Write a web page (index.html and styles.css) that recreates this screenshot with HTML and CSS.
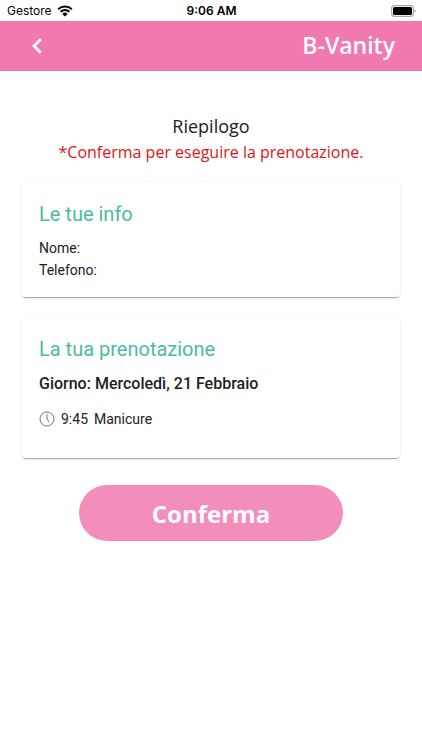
FILE: index.html
```html
<!DOCTYPE html>
<html lang="it">
<head>
<meta charset="utf-8">
<meta name="viewport" content="width=device-width, initial-scale=1">
<title>B-Vanity</title>
<link rel="stylesheet" href="styles.css">
</head>
<body>
<div class="status">
  <div class="carrier">
    <span>Gestore</span>
    <svg class="wifi" viewBox="0 0 16 12" aria-hidden="true">
      <path d="M1.2 4.3A9.8 9.8 0 0 1 14.8 4.3M3.6 6.7A6.3 6.3 0 0 1 12.4 6.7" fill="none" stroke="#000" stroke-width="2"/>
      <path d="M8 11.6 5.3 8.9A3.8 3.8 0 0 1 10.7 8.9Z"/>
    </svg>
  </div>
  <span class="time">9:06 AM</span>
  <svg class="battery" viewBox="0 0 25 12" aria-hidden="true">
    <rect x=".6" y=".6" width="21.8" height="10.8" rx="3" fill="#fff" stroke="#a6a6a6" stroke-width="1.1"/>
    <rect x="2" y="2" width="19" height="8" rx="1.6"/>
    <path d="M23.6 4.2a2 2 0 0 1 0 3.6z" fill="#999"/>
  </svg>
</div>
<header class="bar">
  <a class="back" href="#" aria-label="Indietro">
    <svg viewBox="0 0 12 18" aria-hidden="true"><path d="M9.8 2.2 3 9l6.8 6.8" fill="none" stroke="#fff" stroke-width="2.8"/></svg>
  </a>
  <span class="brand">B-Vanity</span>
</header>
<main class="page">
  <h1 class="title">Riepilogo</h1>
  <p class="notice">*Conferma per eseguire la prenotazione.</p>
  <section class="card">
    <h2 class="card-title">Le tue info</h2>
    <p class="line">Nome:</p>
    <p class="line">Telefono:</p>
  </section>
  <section class="card card-booking">
    <h2 class="card-title">La tua prenotazione</h2>
    <p class="day">Giorno: Mercoledì, 21 Febbraio</p>
    <div class="slot">
      <svg class="clock" viewBox="0 0 16 16" fill="none" stroke="#777" stroke-width="1" aria-hidden="true"><circle cx="8" cy="8" r="7"/><path d="M8 3.2V8l2.3 3.2"/></svg>
      <span>9:45</span>
      <span>Manicure</span>
    </div>
  </section>
  <button class="confirm" type="button">Conferma</button>
</main>
</body>
</html>
```
FILE: styles.css
```css
* {
  box-sizing: border-box;
}

body {
  margin: 0;
  background: #fff;
  color: #212121;
  font-family: Roboto, sans-serif;
}

h1, h2, p {
  margin: 0;
  font-weight: 400;
}

svg {
  display: block;
}

.status {
  display: grid;
  grid-template-columns: 1fr auto 1fr;
  align-items: center;
  height: 21px;
  padding: 0 6px 0 7px;
  color: #000;
  font-family: Inter, sans-serif;
  font-size: 12px;
}

.carrier {
  display: flex;
  align-items: center;
  gap: 5px;
}

.wifi {
  width: 16px;
  height: 12px;
}

.time {
  font-weight: 600;
}

.battery {
  justify-self: end;
  width: 25px;
  height: 12px;
}

.bar {
  display: flex;
  align-items: center;
  justify-content: space-between;
  height: 50px;
  padding: 0 27px 0 31px;
  background: #f179af;
}

.back svg {
  width: 12px;
  height: 18px;
}

.brand {
  padding-bottom: 3px;
  color: #fff;
  font-family: "Open Sans", sans-serif;
  font-size: 23px;
  font-weight: 600;
}

.page {
  display: flex;
  flex-direction: column;
  padding: 42px 22px;
}

.title {
  font-family: "Open Sans", sans-serif;
  font-size: 18px;
  line-height: 26px;
  text-align: center;
}

.notice {
  margin-bottom: 17px;
  color: #e01414;
  font-family: "Open Sans", sans-serif;
  font-size: 16px;
  line-height: 26px;
  text-align: center;
}

.card {
  margin-bottom: 20px;
  padding: 16px 17px;
  border-radius: 4px;
  background: #fff;
  box-shadow: 0 2px 1px -1px rgba(0, 0, 0, .3), 0 1px 3px rgba(0, 0, 0, .12);
}

.card-title {
  margin-bottom: 7px;
  color: #48bda0;
  font-size: 20px;
  line-height: 32px;
}

.line {
  font-size: 14px;
  line-height: 22px;
}

.card-booking {
  margin-bottom: 27px;
  padding-bottom: 28px;
}

.day {
  margin-bottom: 12px;
  font-size: 16px;
  font-weight: 500;
  line-height: 24px;
}

.slot {
  display: flex;
  align-items: center;
  gap: 6px;
  font-size: 14px;
  line-height: 22px;
}

.clock {
  width: 16px;
  height: 16px;
}

.confirm {
  align-self: center;
  width: 70%;
  height: 56px;
  border: 0;
  border-radius: 28px;
  background: #f38ebb;
  color: #fff;
  font-family: "Open Sans", sans-serif;
  font-size: 24px;
  font-weight: 700;
}
```
